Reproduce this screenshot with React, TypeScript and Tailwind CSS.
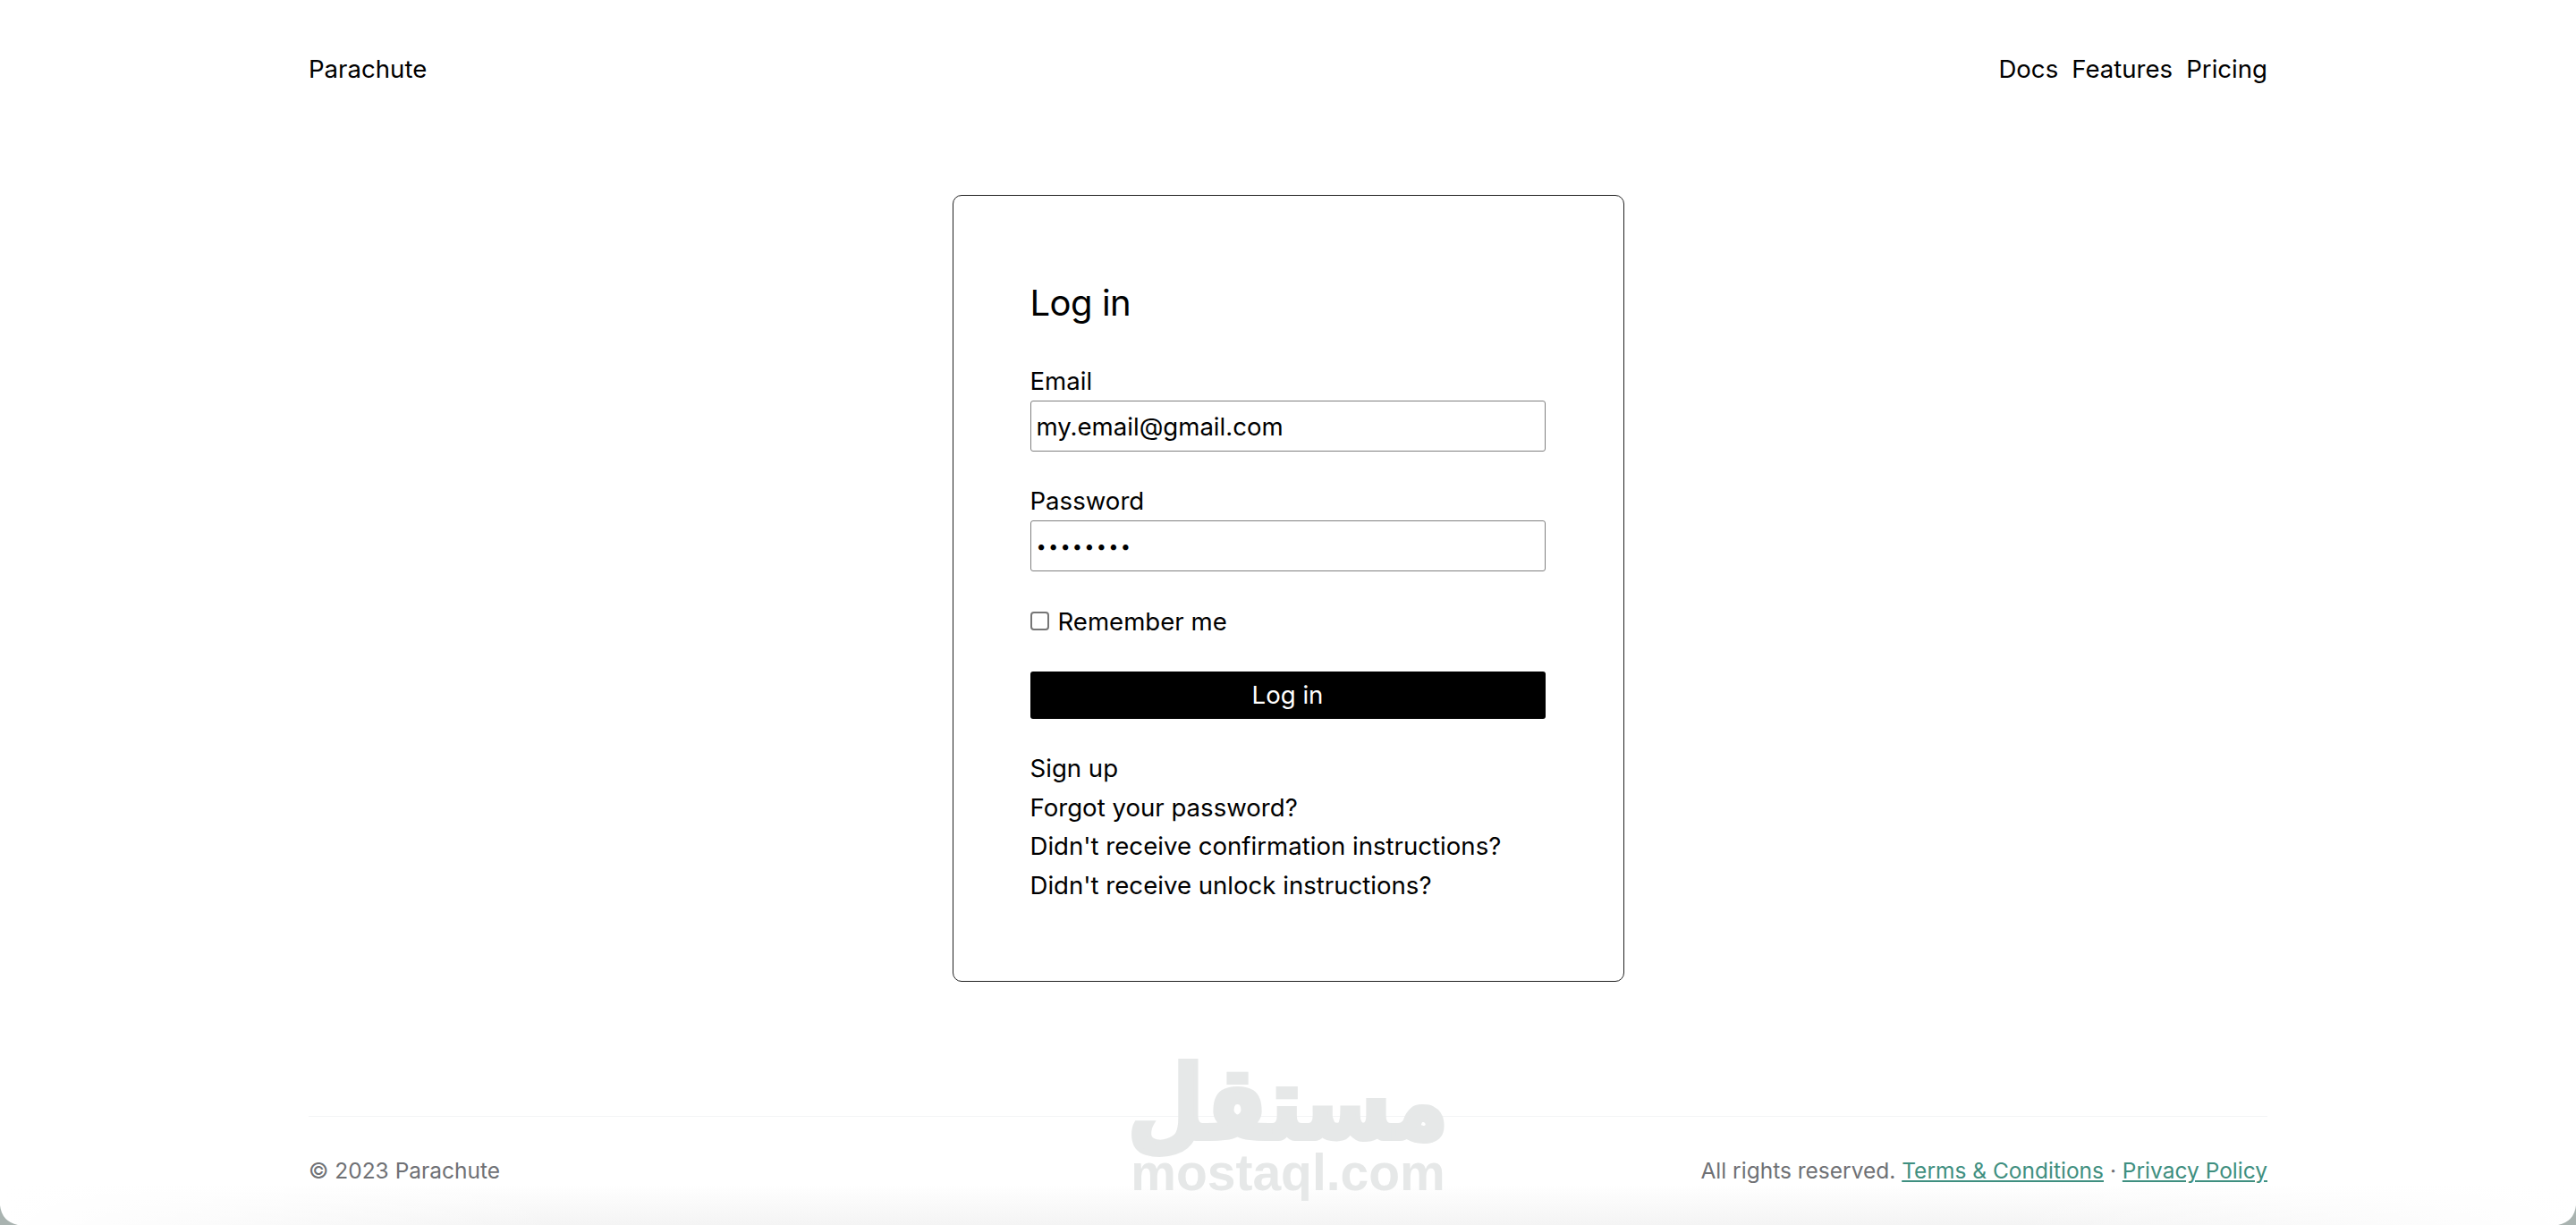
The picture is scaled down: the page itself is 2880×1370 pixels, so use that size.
const linkRows = [
  "Sign up",
  "Forgot your password?",
  "Didn't receive confirmation instructions?",
  "Didn't receive unlock instructions?",
];

export default function App() {
  return (
    <div className="relative h-[1370px] w-full overflow-hidden bg-white font-['Inter',sans-serif] text-[27.6px] leading-[43px] text-black">
      <div className="mx-auto flex h-full w-[2190px] flex-col">
        {/* Header */}
        <header className="flex items-center justify-between pt-[56px]">
          <a>Parachute</a>
          <nav className="flex gap-[15px]">
            <a>Docs</a>
            <a>Features</a>
            <a>Pricing</a>
          </nav>
        </header>

        {/* Login card */}
        <main className="mt-[119px] flex justify-center">
          <div className="h-[880px] w-[751px] rounded-[10px] border border-[#222] px-[86px] pt-[91px]">
            <h1 className="text-[40px] leading-[58px] tracking-[-0.5px]">Log in</h1>

            <div className="mt-[37px]">
              <label className="block">Email</label>
              <input
                readOnly
                value="my.email@gmail.com"
                className="block h-[57px] w-[576px] rounded-[3px] border border-[#808080] px-[6px]"
              />
            </div>

            <div className="mt-[34px]">
              <label className="block">Password</label>
              <input
                readOnly
                type="password"
                value="password"
                className="block h-[57px] w-[576px] rounded-[3px] border border-[#808080] px-[6px] text-[20px] tracking-[2.2px]"
              />
            </div>

            <div className="mt-[35px] flex items-center gap-[10px]">
              <input
                type="checkbox"
                className="mb-[2px] h-[21px] w-[21px] appearance-none rounded-[4px] border-2 border-[#767676]"
              />
              <label>Remember me</label>
            </div>

            <button className="mt-[34px] block h-[53px] w-[576px] rounded-[3px] bg-black text-white">
              Log in
            </button>

            <div className="mt-[34px] leading-[43.5px]">
              {linkRows.map((row) => (
                <a key={row} className="block">
                  {row}
                </a>
              ))}
            </div>
          </div>
        </main>

        {/* Footer */}
        <footer className="mt-[150px] flex items-center justify-between border-t border-[#f3f4f6] pt-[41px] text-[24.5px] leading-[38px] text-[#6f7175]">
          <span>© 2023 Parachute</span>
          <span>
            All rights reserved.{" "}
            <a className="text-[#3f8f80] underline">Terms &amp; Conditions</a>
            {" · "}
            <a className="text-[#3f8f80] underline">Privacy Policy</a>
          </span>
        </footer>
      </div>

      {/* Bottom edge shade */}
      <div className="pointer-events-none absolute inset-x-0 bottom-0 h-[45px] bg-[linear-gradient(to_right,#ffffff,#ffffff00_22%,#ffffff00_78%,#ffffff),linear-gradient(to_bottom,#ffffff,#f4f4f4)]" />

      {/* Window corners */}
      <svg className="absolute bottom-0 left-0 h-[22px] w-[20px]" viewBox="0 0 20 22">
        <path d="M0 0Q2 18 20 22H0Z" fill="#a9b3b0" />
      </svg>
      <svg className="absolute bottom-0 right-0 h-[22px] w-[20px]" viewBox="0 0 20 22">
        <path d="M20 0Q18 18 0 22H20Z" fill="#a9b3b0" />
      </svg>

      {/* Watermark */}
      <div className="pointer-events-none absolute bottom-[30px] left-[1266px] flex w-[348px] flex-col items-center text-[#e6e8e8]">
        <span
          dir="rtl"
          className="scale-y-[1.15] font-['DejaVu_Sans',sans-serif] text-[98px] font-bold leading-[96px] [-webkit-text-stroke:5px_#e6e8e8]"
        >
          مستقل
        </span>
        <span className="font-['Liberation_Sans',sans-serif] text-[57px] font-bold leading-[58px]">
          mostaql.com
        </span>
      </div>
    </div>
  );
}
